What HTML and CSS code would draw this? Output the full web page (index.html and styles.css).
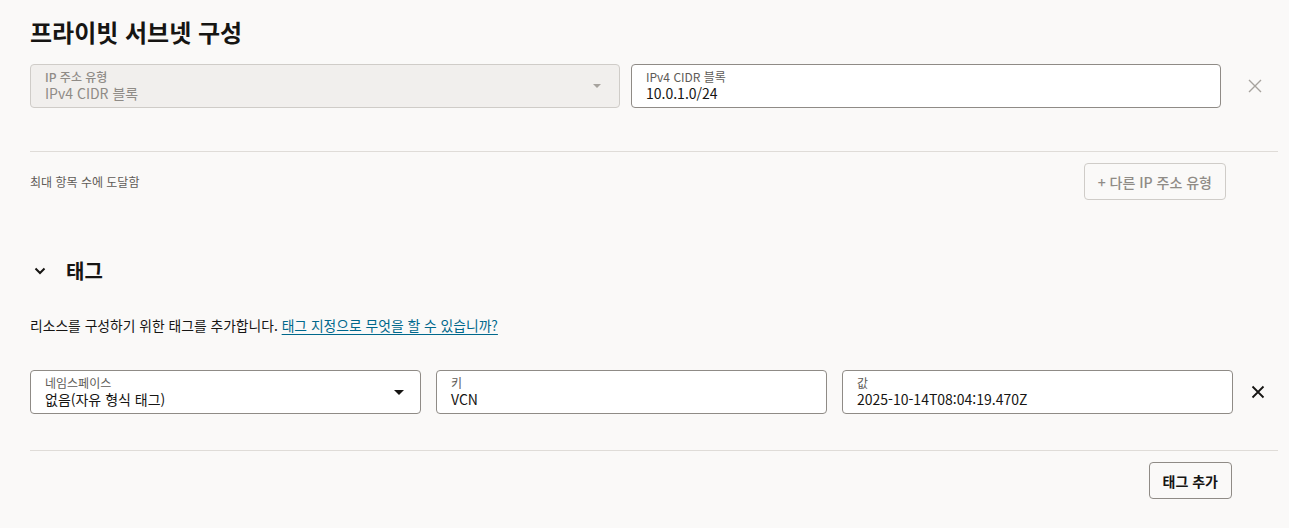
FILE: index.html
```html
<!DOCTYPE html>
<html lang="ko">
<head>
<meta charset="UTF-8">
<title>프라이빗 서브넷 구성</title>
<link rel="stylesheet" href="styles.css">
</head>
<body>
<div class="page">
    <h1 class="title">프라이빗 서브넷 구성</h1>

    <div class="cidr-row">
        <div class="field field-disabled">
            <div class="field-text">
                <div class="field-label">IP 주소 유형</div>
                <div class="field-value">IPv4 CIDR 블록</div>
            </div>
            <span class="caret caret-light"></span>
        </div>
        <div class="field">
            <div class="field-text">
                <div class="field-label">IPv4 CIDR 블록</div>
                <div class="field-value">10.0.1.0/24</div>
            </div>
        </div>
        <button class="icon-btn icon-btn-light" aria-label="삭제">
            <svg width="16" height="16" viewBox="0 0 16 16"><path d="M2 2 L14 14 M14 2 L2 14" stroke="currentColor" stroke-width="1.4" fill="none"/></svg>
        </button>
    </div>

    <div class="divider"></div>

    <div class="limit-row">
        <span class="limit-text">최대 항목 수에 도달함</span>
        <button class="btn btn-disabled">+ 다른 IP 주소 유형</button>
    </div>

    <div class="section-head">
        <svg class="chevron" width="14" height="14" viewBox="0 0 14 14"><path d="M2.5 4.5 L7 9 L11.5 4.5" stroke="#161513" stroke-width="2" fill="none"/></svg>
        <h2 class="section-title">태그</h2>
    </div>

    <p class="desc">리소스를 구성하기 위한 태그를 추가합니다. <a href="#">태그 지정으로 무엇을 할 수 있습니까?</a></p>

    <div class="tag-row">
        <div class="field">
            <div class="field-text">
                <div class="field-label">네임스페이스</div>
                <div class="field-value">없음(자유 형식 태그)</div>
            </div>
            <span class="caret"></span>
        </div>
        <div class="field">
            <div class="field-text">
                <div class="field-label">키</div>
                <div class="field-value">VCN</div>
            </div>
        </div>
        <div class="field">
            <div class="field-text">
                <div class="field-label">값</div>
                <div class="field-value">2025-10-14T08:04:19.470Z</div>
            </div>
        </div>
        <button class="icon-btn" aria-label="삭제">
            <svg width="14" height="14" viewBox="0 0 14 14"><path d="M1.5 1.5 L12.5 12.5 M12.5 1.5 L1.5 12.5" stroke="currentColor" stroke-width="1.8" fill="none"/></svg>
        </button>
    </div>

    <div class="divider divider-bottom"></div>

    <div class="add-row">
        <button class="btn">태그 추가</button>
    </div>
</div>
</body>
</html>
```

FILE: styles.css
```css
body {
    margin: 0;
    background-color: #faf9f8;
    color: #161513;
    font-family: "Noto Sans CJK KR", "Noto Sans", sans-serif;
}

.page {
    padding: 14px 11px 0 30px;
}

.title {
    margin: 0 0 14px 0;
    font-size: 24px;
    font-weight: 700;
    line-height: 36px;
}

.cidr-row {
    display: flex;
    align-items: center;
}

.cidr-row .field {
    width: 590px;
    margin-right: 11px;
}

.cidr-row .field:nth-child(2) {
    margin-right: 0;
}

.field {
    box-sizing: border-box;
    height: 44px;
    border: 1px solid #8f8b86;
    border-radius: 4px;
    background-color: #ffffff;
    display: flex;
    align-items: center;
    padding: 0 14px;
}

.field-disabled {
    background-color: #f1efed;
    border-color: #cfccc8;
}

.field-text {
    flex: 1;
    min-width: 0;
}

.field-label {
    font-size: 12px;
    line-height: 15px;
    color: #5e5b57;
}

.field-value {
    font-size: 14px;
    line-height: 19px;
}

.field-disabled .field-label {
    color: #8f8b86;
    font-weight: 500;
}

.field-disabled .field-value {
    color: #8f8b86;
}

.caret {
    width: 0;
    height: 0;
    border-left: 5px solid transparent;
    border-right: 5px solid transparent;
    border-top: 5px solid #161513;
    margin-right: 2px;
}

.caret-light {
    border-left-width: 4px;
    border-right-width: 4px;
    border-top: 4px solid #a7a39e;
    margin-right: 4px;
}

.icon-btn {
    border: none;
    background: none;
    padding: 0;
    margin-left: auto;
    width: 40px;
    height: 44px;
    display: flex;
    align-items: center;
    justify-content: center;
    color: #161513;
}

.icon-btn-light {
    color: #a7a39e;
    width: 46px;
}

.divider {
    height: 1px;
    background-color: #dfdcd8;
    margin-top: 43px;
}

.limit-row {
    display: flex;
    align-items: center;
    justify-content: space-between;
    margin-top: 11px;
    padding-right: 52px;
}

.limit-text {
    font-size: 12px;
    color: #5e5b57;
}

.btn {
    box-sizing: border-box;
    height: 37px;
    padding: 0 13px;
    border: 1px solid #8f8b86;
    border-radius: 4px;
    background-color: #faf9f8;
    color: #161513;
    font-family: inherit;
    font-size: 14px;
    font-weight: 700;
}

.btn-disabled {
    border-color: #cfccc8;
    color: #8f8b86;
    font-weight: 500;
}

.section-head {
    display: flex;
    align-items: center;
    margin-top: 57px;
}

.chevron {
    margin-left: 3px;
    margin-right: 19px;
}

.section-title {
    margin: 0;
    font-size: 20px;
    font-weight: 700;
    line-height: 28px;
}

.desc {
    margin: 30px 0 0 0;
    font-size: 13.8px;
    line-height: 20px;
}

.desc a {
    color: #00688c;
    text-decoration: underline;
    text-underline-offset: 3px;
}

.tag-row {
    display: flex;
    align-items: center;
    margin-top: 35px;
}

.tag-row .field {
    width: 391px;
    margin-right: 15px;
}

.tag-row .field:nth-child(3) {
    margin-right: 0;
}

.divider-bottom {
    margin-top: 36px;
}

.add-row {
    display: flex;
    justify-content: flex-end;
    margin-top: 11px;
    padding-right: 46px;
}
```
